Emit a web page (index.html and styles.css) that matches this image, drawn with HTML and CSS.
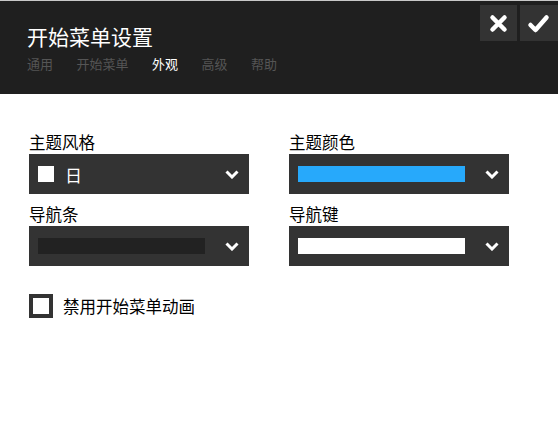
FILE: index.html
```html
<!DOCTYPE html>
<html lang="zh">
<head>
<meta charset="utf-8">
<link rel="stylesheet" href="styles.css">
</head>
<body>
<header class="header">
  <div class="actions">
    <button class="btn" aria-label="关闭">
      <svg width="37" height="36" viewBox="0 0 37 36"><path d="M12.5 12.5 L24.5 24.5 M24.5 12.5 L12.5 24.5" stroke="#fff" stroke-width="4.5" stroke-linecap="round" fill="none"/></svg>
    </button>
    <button class="btn btn-ok" aria-label="确定">
      <svg width="38" height="36" viewBox="0 0 38 36"><path d="M10.5 20 L15.5 25 L26.5 12.5" stroke="#fff" stroke-width="4.5" stroke-linecap="round" stroke-linejoin="round" fill="none"/></svg>
    </button>
  </div>
  <h1 class="title">开始菜单设置</h1>
  <nav class="tabs">
    <span class="tab">通用</span>
    <span class="tab">开始菜单</span>
    <span class="tab active">外观</span>
    <span class="tab">高级</span>
    <span class="tab">帮助</span>
  </nav>
</header>
<main class="content">
  <div class="grid">
    <div class="field">
      <div class="label">主题风格</div>
      <div class="select">
        <span class="sq"></span><span class="stext">日</span>
        <span class="spacer"></span>
        <svg class="chev" width="14" height="9" viewBox="0 0 14 9"><path d="M1.5 1.5 L7 7 L12.5 1.5" stroke="#fff" stroke-width="3" fill="none"/></svg>
      </div>
    </div>
    <div class="field">
      <div class="label">主题颜色</div>
      <div class="select">
        <span class="swatch blue"></span>
        <svg class="chev" width="14" height="9" viewBox="0 0 14 9"><path d="M1.5 1.5 L7 7 L12.5 1.5" stroke="#fff" stroke-width="3" fill="none"/></svg>
      </div>
    </div>
    <div class="field">
      <div class="label">导航条</div>
      <div class="select">
        <span class="swatch dark"></span>
        <svg class="chev" width="14" height="9" viewBox="0 0 14 9"><path d="M1.5 1.5 L7 7 L12.5 1.5" stroke="#fff" stroke-width="3" fill="none"/></svg>
      </div>
    </div>
    <div class="field">
      <div class="label">导航键</div>
      <div class="select">
        <span class="swatch white"></span>
        <svg class="chev" width="14" height="9" viewBox="0 0 14 9"><path d="M1.5 1.5 L7 7 L12.5 1.5" stroke="#fff" stroke-width="3" fill="none"/></svg>
      </div>
    </div>
  </div>
  <label class="check">
    <span class="box"></span>
    <span class="ctext">禁用开始菜单动画</span>
  </label>
</main>
</body>
</html>
```

FILE: styles.css
```css
html, body {
  margin: 0;
  padding: 0;
  background: #fff;
}
body {
  font-family: "Noto Sans CJK SC", "Noto Sans", sans-serif;
  width: 558px;
  height: 421px;
  overflow: hidden;
}
.header {
  position: relative;
  background: #1f1f1f;
  border-top: 1px solid #c8c8c8;
  height: 94px;
  box-sizing: border-box;
  padding: 22px 0 0 27px;
}
.title {
  margin: 0;
  font-weight: normal;
  font-size: 21px;
  line-height: 26px;
  color: #fff;
}
.tabs {
  display: flex;
  gap: 23.5px;
  margin-top: 6px;
  font-size: 13px;
  line-height: 18px;
}
.tab {
  color: #555;
}
.tab.active {
  color: #fff;
}
.actions {
  position: absolute;
  top: 4px;
  right: 0;
  display: flex;
  gap: 3px;
}
.btn {
  border: 0;
  padding: 0;
  margin: 0;
  width: 37px;
  height: 36px;
  background: #333;
  display: block;
}
.btn svg { display: block; }
.btn-ok { width: 38px; }
.content {
  padding: 37px 0 0 29px;
}
.grid {
  display: grid;
  grid-template-columns: 220px 220px;
  column-gap: 40px;
  row-gap: 9px;
}
.label {
  font-size: 16.5px;
  line-height: 22px;
  color: #000;
  margin-bottom: 1px;
}
.select {
  height: 40px;
  background: #333;
  display: flex;
  align-items: center;
  padding: 0 10px 0 9px;
  box-sizing: border-box;
}
.swatch {
  width: 167px;
  height: 16px;
  margin-right: 20px;
}
.swatch.blue { background: #27a9fb; }
.swatch.dark { background: #222; }
.swatch.white { background: #fff; }
.sq {
  width: 16px;
  height: 16px;
  background: #fff;
}
.stext {
  color: #fff;
  font-size: 17px;
  margin-left: 11px;
  line-height: 20px;
  margin-top: 2px;
}
.spacer { flex: 1; }
.chev { display: block; flex: none; margin-top: 1px; }
.check {
  display: flex;
  align-items: center;
  margin-top: 28px;
}
.box {
  width: 24px;
  height: 24px;
  box-sizing: border-box;
  border: 4px solid #333;
  background: #fff;
}
.ctext {
  margin-left: 10px;
  font-size: 16.5px;
  line-height: 22px;
  color: #000;
}
```
